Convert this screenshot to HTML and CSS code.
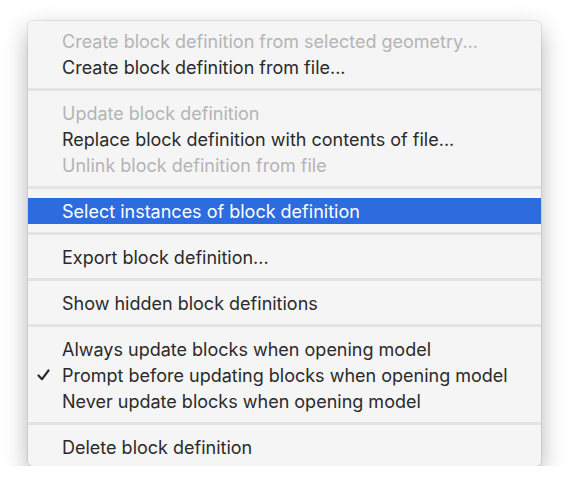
FILE: index.html
```html
<!DOCTYPE html>
<html lang="en">
<head>
    <meta charset="UTF-8">
    <title>Block definition menu</title>
    <meta name="viewport" content="width=device-width, initial-scale=1.0">
    <link rel="stylesheet" href="styles.css">
</head>
<body>

    <div class="menu">
        <div class="item disabled"><span class="mark"></span>Create block definition from selected geometry...</div>
        <div class="item"><span class="mark"></span>Create block definition from file...</div>
        <div class="sep"></div>
        <div class="item disabled"><span class="mark"></span>Update block definition</div>
        <div class="item"><span class="mark"></span>Replace block definition with contents of file...</div>
        <div class="item disabled"><span class="mark"></span>Unlink block definition from file</div>
        <div class="sep"></div>
        <div class="item active"><span class="mark"></span>Select instances of block definition</div>
        <div class="sep"></div>
        <div class="item"><span class="mark"></span>Export block definition...</div>
        <div class="sep"></div>
        <div class="item"><span class="mark"></span>Show hidden block definitions</div>
        <div class="sep"></div>
        <div class="item"><span class="mark"></span>Always update blocks when opening model</div>
        <div class="item">
            <span class="mark">
                <svg width="13" height="12" viewBox="0 0 13 12"><path d="M1.5 6.5 L5 10.2 L11.5 1.5" fill="none" stroke="#2b2b2b" stroke-width="2.2" stroke-linecap="round" stroke-linejoin="round"/></svg>
            </span>Prompt before updating blocks when opening model</div>
        <div class="item"><span class="mark"></span>Never update blocks when opening model</div>
        <div class="sep"></div>
        <div class="item"><span class="mark"></span>Delete block definition</div>
    </div>

</body>
</html>
```

FILE: styles.css
```css
* {
    box-sizing: border-box;
    margin: 0;
    padding: 0;
}
body {
    background: #ffffff;
    font-family: Inter, "Noto Sans", sans-serif;
    padding: 21px 0 0 28px;
}
.menu {
    width: 513px;
    height: 445px;
    padding: 7px 0 6px;
    background: #f5f5f5;
    border-radius: 5px;
    box-shadow: 0 0 0 1px rgba(0, 0, 0, 0.07), 0 9px 24px rgba(0, 0, 0, 0.3);
}
.item {
    display: flex;
    align-items: center;
    height: 26px;
    font-size: 18px;
    color: #2a2a2a;
    white-space: nowrap;
}
.item.disabled {
    color: #b4b4b4;
}
.item.active {
    background: #2d6cde;
    color: #ffffff;
}
.mark {
    display: flex;
    align-items: center;
    width: 34px;
    height: 100%;
    padding-left: 9px;
    flex-shrink: 0;
}
.sep {
    height: 3px;
    margin: 8px 0 9px;
    background: #e4e4e4;
}
```
